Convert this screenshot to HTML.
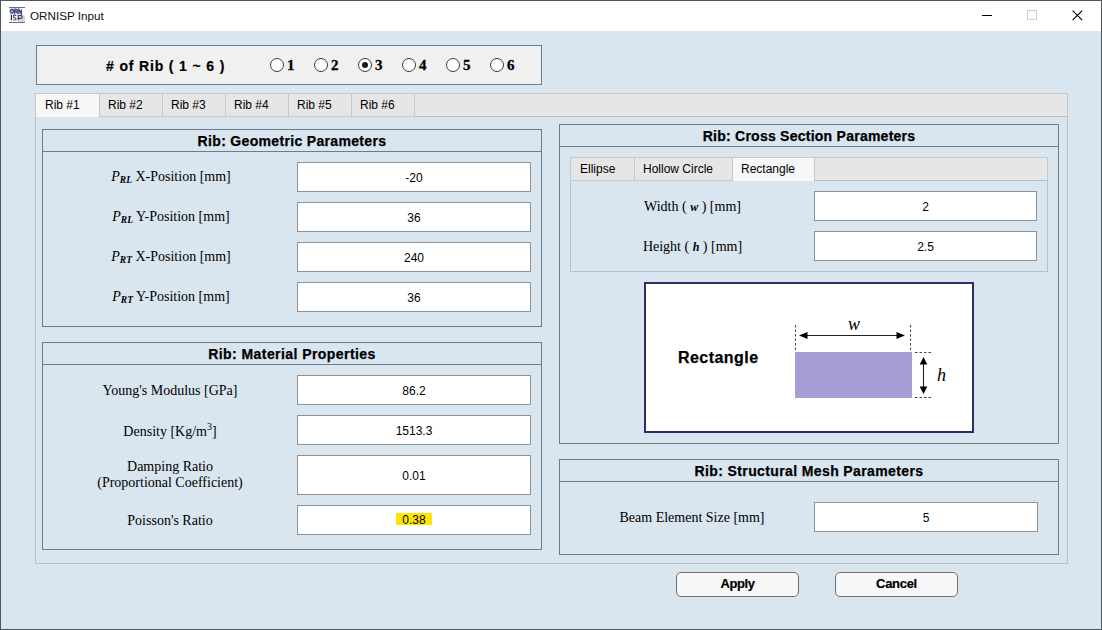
<!DOCTYPE html>
<html><head><meta charset="utf-8">
<style>
*{margin:0;padding:0;box-sizing:border-box}
html,body{width:1102px;height:630px;overflow:hidden;background:#d9e5ef}
body{position:relative;font-family:"Liberation Sans",sans-serif;color:#000}
.a{position:absolute;white-space:nowrap}
.panel{position:absolute;border:1px solid #6f7b86}
.ph{position:absolute;left:0;top:0;right:0;height:22px;border-bottom:1px solid #6f7b86;text-align:center;font-weight:bold;font-size:14px;line-height:23px;letter-spacing:0.25px;-webkit-text-stroke:0.25px #000}
.tb{position:absolute;background:#fff;border:1px solid #8e9398;text-align:center;font-size:12px}
.lbl{position:absolute;font-family:"Liberation Serif",serif;font-size:14px;text-align:center;line-height:16px;white-space:nowrap}
.tab{position:absolute;top:93px;height:24px;border:1px solid #c8c8c8;border-left:none;background:#e6e6e6;font-size:12px;padding-left:8px;line-height:22px}
.btn{position:absolute;background:#f7f7f7;border:1px solid #6f6f6f;border-radius:5px;text-align:center;font-weight:bold;font-size:13px;-webkit-text-stroke:0.2px #000}
.rad{position:absolute;width:14px;height:14px;border:1px solid #3c3c3c;border-radius:50%;background:#fff;top:58px}
.rl{position:absolute;font-family:"Liberation Serif",serif;font-weight:bold;font-size:15px;top:57px;-webkit-text-stroke:0.3px #000}
.itab{position:absolute;top:157px;height:24px;border:1px solid #c8c8c8;border-left:none;background:#e6e6e6;font-size:12px;padding-left:9px;line-height:22px}
i.it{font-style:italic}
b.bi{font-style:italic;font-weight:bold;font-size:12px}
</style></head><body>
<!-- window frame -->
<div class="a" style="left:0;top:0;width:1102px;height:630px;border:1px solid #4d5761"></div>
<div class="a" style="left:1px;top:1px;width:1100px;height:30px;background:#fff"></div>
<!-- icon -->
<svg class="a" style="left:9px;top:7px" width="16" height="16" viewBox="0 0 16 16">
  <rect x="0.5" y="1" width="7" height="7" fill="#dcdcf2"/>
  <rect x="9" y="8.5" width="7" height="6.5" fill="#d4d4e0"/>
  <rect x="0" y="0" width="16" height="1" fill="#6c6c8c"/>
  <rect x="0" y="15" width="16" height="1" fill="#6c6c8c"/>
  <g fill="none" stroke="#3f3f88" stroke-width="1.3">
    <ellipse cx="2.9" cy="4.3" rx="1.5" ry="1.8"/>
    <path d="M5.6 6.8V2.4H7.4Q8.6 2.4 8.6 3.5Q8.6 4.5 7.4 4.5H5.6M7.4 4.5L8.8 6.8"/>
    <path d="M9.9 6.8V2.4L12.4 6.8V2.4"/>
  </g>
  <g fill="none" stroke="#2a2a2a" stroke-width="1.2">
    <path d="M2.4 8V13.2"/>
    <path d="M7.2 8.8Q6.6 8.2 5.6 8.2Q4.3 8.2 4.3 9.4Q4.3 10.4 5.7 10.6Q7.1 10.9 7.1 11.9Q7.1 13 5.6 13Q4.5 13 4 12.4" stroke="#555"/>
    <path d="M9.2 13.3V8.4H11.6Q13.2 8.4 13.2 9.9Q13.2 11.4 11.6 11.4H9.2" stroke="#444"/>
  </g>
</svg>
<div class="a" style="left:30px;top:8px;font-size:11.7px;line-height:15px;color:#111">ORNISP Input</div>
<!-- window controls -->
<div class="a" style="left:982px;top:15px;width:10px;height:1px;background:#000"></div>
<div class="a" style="left:1027px;top:10px;width:10px;height:10px;border:1px solid #cccccc"></div>
<svg class="a" style="left:1072px;top:10px" width="11" height="11" viewBox="0 0 11 11"><path d="M0.6 0.6L10.2 10.2M10.2 0.6L0.6 10.2" stroke="#000" stroke-width="1.1"/></svg>

<!-- rib count box -->
<div class="a" style="left:36px;top:45px;width:506px;height:40px;background:#f0f0f0;border:1px solid #6f7b86"></div>
<div class="a" style="left:106px;top:58px;font-weight:bold;font-size:14px;line-height:16px;letter-spacing:0.85px;-webkit-text-stroke:0.2px #000">#&nbsp;of Rib ( 1 ~ 6 )</div>
<div class="rad" style="left:270px"></div><div class="rl" style="left:287px;line-height:16px">1</div>
<div class="rad" style="left:314px"></div><div class="rl" style="left:331px;line-height:16px">2</div>
<div class="rad" style="left:358px"><div class="a" style="left:3px;top:3px;width:6px;height:6px;border-radius:50%;background:#1a1a1a"></div></div><div class="rl" style="left:375px;line-height:16px">3</div>
<div class="rad" style="left:402px"></div><div class="rl" style="left:419px;line-height:16px">4</div>
<div class="rad" style="left:446px"></div><div class="rl" style="left:463px;line-height:16px">5</div>
<div class="rad" style="left:490px"></div><div class="rl" style="left:507px;line-height:16px">6</div>

<!-- tab strip -->
<div class="a" style="left:35px;top:93px;width:1033px;height:24px;background:#e6e6e6;border:1px solid #c8c8c8"></div>
<div class="a" style="left:35px;top:116px;width:1033px;height:448px;border:1px solid #b9c2ca"></div>
<div class="tab" style="left:100px;width:63px">Rib #2</div>
<div class="tab" style="left:163px;width:63px">Rib #3</div>
<div class="tab" style="left:226px;width:63px">Rib #4</div>
<div class="tab" style="left:289px;width:63px">Rib #5</div>
<div class="tab" style="left:352px;width:63px">Rib #6</div>
<div class="tab" style="left:35px;width:65px;background:#f7f7f7;border-left:1px solid #c8c8c8;border-bottom:none;height:24px;padding-left:9px">Rib #1</div>

<!-- geometric -->
<div class="panel" style="left:42px;top:129px;width:500px;height:198px"><div class="ph" style="letter-spacing:0.33px">Rib: Geometric Parameters</div></div>
<div class="lbl" style="left:44px;width:254px;top:169px"><i class="it">P</i><sub style="font-size:9.5px;font-weight:bold;font-style:italic;vertical-align:-2px">RL</sub> X-Position [mm]</div>
<div class="lbl" style="left:44px;width:254px;top:209px"><i class="it">P</i><sub style="font-size:9.5px;font-weight:bold;font-style:italic;vertical-align:-2px">RL</sub> Y-Position [mm]</div>
<div class="lbl" style="left:44px;width:254px;top:249px"><i class="it">P</i><sub style="font-size:9.5px;font-weight:bold;font-style:italic;vertical-align:-2px">RT</sub> X-Position [mm]</div>
<div class="lbl" style="left:44px;width:254px;top:289px"><i class="it">P</i><sub style="font-size:9.5px;font-weight:bold;font-style:italic;vertical-align:-2px">RT</sub> Y-Position [mm]</div>
<div class="tb" style="left:297px;top:162px;width:234px;height:30px;line-height:30px">-20</div>
<div class="tb" style="left:297px;top:202px;width:234px;height:30px;line-height:30px">36</div>
<div class="tb" style="left:297px;top:242px;width:234px;height:30px;line-height:30px">240</div>
<div class="tb" style="left:297px;top:282px;width:234px;height:30px;line-height:30px">36</div>

<!-- material -->
<div class="panel" style="left:42px;top:342px;width:500px;height:208px"><div class="ph" style="letter-spacing:0.43px">Rib: Material Properties</div></div>
<div class="lbl" style="left:43px;width:254px;top:383px">Young's Modulus [GPa]</div>
<div class="lbl" style="left:43px;width:254px;top:424px">Density [Kg/m<sup style="font-size:10px;vertical-align:baseline;position:relative;top:-6px">3</sup>]</div>
<div class="lbl" style="left:43px;width:254px;top:459px">Damping Ratio<br>(Proportional Coefficient)</div>
<div class="lbl" style="left:43px;width:254px;top:513px">Poisson's Ratio</div>
<div class="tb" style="left:297px;top:375px;width:234px;height:30px;line-height:30px">86.2</div>
<div class="tb" style="left:297px;top:415px;width:234px;height:30px;line-height:30px">1513.3</div>
<div class="tb" style="left:297px;top:455px;width:234px;height:40px;line-height:40px">0.01</div>
<div class="tb" style="left:297px;top:505px;width:234px;height:30px;line-height:30px"><span style="display:inline-block;background:#ffe600;padding:1px 6px 0;height:12px;line-height:12px;vertical-align:1px">0.38</span></div>

<!-- cross section -->
<div class="panel" style="left:559px;top:124px;width:500px;height:320px"><div class="ph">Rib: Cross Section Parameters</div></div>
<div class="a" style="left:570px;top:157px;width:478px;height:24px;background:#e6e6e6;border:1px solid #c8c8c8"></div>
<div class="a" style="left:570px;top:180px;width:478px;height:92px;border:1px solid #b9c2ca"></div>
<div class="itab" style="left:634px;width:99px">Hollow Circle</div>
<div class="itab" style="left:570px;width:65px;border-left:1px solid #c8c8c8">Ellipse</div>
<div class="itab" style="left:732px;width:83px;background:#f7f7f7;border-bottom:none;border-left:1px solid #c8c8c8;padding-left:8px">Rectangle</div>
<div class="lbl" style="left:571px;width:243px;top:199px">Width ( <b class="bi">w</b> ) [mm]</div>
<div class="lbl" style="left:571px;width:243px;top:239px">Height ( <b class="bi">h</b> ) [mm]</div>
<div class="tb" style="left:814px;top:191px;width:223px;height:30px;line-height:30px">2</div>
<div class="tb" style="left:814px;top:231px;width:223px;height:30px;line-height:30px">2.5</div>

<!-- diagram -->
<div class="a" style="left:644px;top:282px;width:330px;height:151px;background:#fff;border:2px solid #2e2e66"></div>
<div class="a" style="left:678px;top:349px;font-weight:bold;font-size:16px;line-height:18px;letter-spacing:0.45px;-webkit-text-stroke:0.25px #000">Rectangle</div>
<svg class="a" style="left:780px;top:310px" width="180" height="100" viewBox="0 0 180 100">
  <rect x="15" y="42" width="117" height="46" fill="#a59fd6"/>
  <path d="M15.5 15V41M130.5 15V41" stroke="#444" stroke-width="1" stroke-dasharray="2.5,2"/>
  <path d="M135 42.5H153M135 87.5H153" stroke="#444" stroke-width="1" stroke-dasharray="2.5,2"/>
  <path d="M24 25.5H120" stroke="#222" stroke-width="1.1"/>
  <path d="M19 25.5L27.5 22V29Z M125 25.5L116.5 22V29Z" fill="#000"/>
  <path d="M143.5 52V79" stroke="#222" stroke-width="1.1"/>
  <path d="M143.5 47L139.7 54.5H147.3Z M143.5 84L139.7 76.5H147.3Z" fill="#000"/>
</svg>
<div class="a" style="left:848px;top:315px;font-family:'Liberation Serif',serif;font-style:italic;font-size:18px;line-height:18px">w</div>
<div class="a" style="left:937px;top:366px;font-family:'Liberation Serif',serif;font-style:italic;font-size:18px;line-height:18px">h</div>

<!-- mesh -->
<div class="panel" style="left:559px;top:459px;width:500px;height:96px"><div class="ph" style="letter-spacing:0.38px">Rib: Structural Mesh Parameters</div></div>
<div class="lbl" style="left:570px;width:244px;top:510px">Beam Element Size [mm]</div>
<div class="tb" style="left:814px;top:502px;width:224px;height:30px;line-height:30px">5</div>

<div class="btn" style="left:676px;top:572px;width:123px;height:25px;line-height:22px;letter-spacing:-0.4px">Apply</div>
<div class="btn" style="left:835px;top:572px;width:123px;height:25px;line-height:22px;letter-spacing:-0.3px">Cancel</div>
</body></html>
